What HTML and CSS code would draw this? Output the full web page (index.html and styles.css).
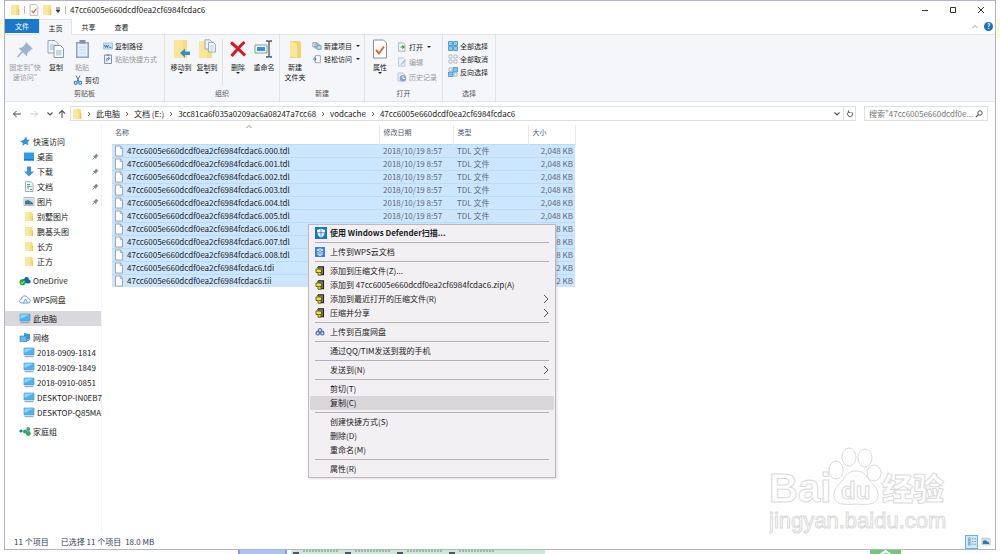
FILE: index.html
```html
<!DOCTYPE html>
<html lang="zh-CN">
<head>
<meta charset="utf-8">
<title>47cc6005e660dcdf0ea2cf6984fcdac6</title>
<link rel="stylesheet" href="styles.css">
</head>
<body>
<svg class="sprite" aria-hidden="true">
  <symbol id="folder" viewBox="0 0 10 12"><path d="M1 1h7l1 1v9H1z" fill="#f9dd82"/><path d="M1 1h5v10H1z" fill="#fce79c"/><path d="M8 5h1.4v6H8z" fill="#efc85c"/></symbol>
  <symbol id="file" viewBox="0 0 10 12"><path d="M1.500 1h5l2 2.200V11h-7z" fill="#fff" stroke="#8b949c" stroke-width=".8"/><path d="M6.300 1v2.500h2.200" fill="none" stroke="#8b949c" stroke-width=".7"/></symbol>
  <symbol id="checkdoc" viewBox="0 0 16 20"><path d="M1.500 1h10l3 3v15h-13z" fill="#fff" stroke="#8a8f98"/><path d="M4 11l3 3.500 5-7" fill="none" stroke="#e0662c" stroke-width="2"/></symbol>
  <symbol id="pc" viewBox="0 0 12 11"><path d="M1 1h10v7H1z" fill="#4bb3ee" stroke="#5b9cc4" stroke-width=".7"/><path d="M1.500 1.500h9L1.500 6z" fill="#8fd5fa"/><path d="M1.500 9.700h9" stroke="#8a9aa6" stroke-width="1"/></symbol>
  <symbol id="pushpin" viewBox="0 0 8 8"><path d="M4.500.5l3 3-1 .3-1.500 1.500L4.700 7 1 3.300l1.800-.3L4.300 1.500z" fill="#7e8b99"/><path d="M3 5L.6 7.400" stroke="#7e8b99" stroke-width=".9"/></symbol>
  <symbol id="bigpin" viewBox="0 0 20 20"><path d="M11 3l7 7-2 .6-3.500 3.400-.6 3.500L3.500 9l3.500-.6L10.400 5z" fill="#9fb3cf"/><path d="M7.500 12.500L2.500 18" stroke="#9fb3cf" stroke-width="1.600"/></symbol>
  <symbol id="copy" viewBox="0 0 20 20"><path d="M2 1.500h7l3 3V14H2z" fill="#eef4fb" stroke="#93a5b8"/><path d="M4 6h5M4 8h5M4 10h5" stroke="#8fbce0"/><path d="M8 6.500h6.500l3 3v9H8z" fill="#fff" stroke="#8598ae"/><path d="M10 11h5.500v5.500H10z" fill="#b7d8f1"/></symbol>
  <symbol id="paste" viewBox="0 0 20 20"><path d="M4 3h13v16H4z" fill="#8da4c6"/><path d="M5.500 4.500h10v13h-10z" fill="#e3effb"/><path d="M7.500 1h6v3.500h-6z" fill="#7f91ab"/><path d="M7 8h7M7 11h7M7 14h7" stroke="#c7dcf2"/></symbol>
  <symbol id="path" viewBox="0 0 10 8"><path d="M.5 1h9v6h-9z" fill="#c3e2fa" stroke="#7eb7e2" stroke-width=".7"/><path d="M1.500 3l1 2.500 1-2 1 2 1-2.500M6.300 5.300h2" fill="none" stroke="#245d91" stroke-width=".9"/></symbol>
  <symbol id="shortcut" viewBox="0 0 10 10"><path d="M1.500 1h7v8.500h-7z" fill="#eef5fc" stroke="#7589a6" stroke-width=".9"/><path d="M3.500.4h3v1.400h-3z" fill="#7589a6"/><path d="M3.800 7.500V4.500h2M5 3l1.800 1.500L5 6" fill="none" stroke="#4677b4" stroke-width=".9"/></symbol>
  <symbol id="cut" viewBox="0 0 10 10"><path d="M3 .5l3 6M7 .5l-3 6" stroke="#60758a" stroke-width="1"/><circle cx="2.800" cy="7.800" r="1.500" fill="none" stroke="#2b83c8" stroke-width="1.200"/><circle cx="7.200" cy="7.800" r="1.500" fill="none" stroke="#2b83c8" stroke-width="1.200"/></symbol>
  <symbol id="moveto" viewBox="0 0 20 20"><path d="M3 1h13v18H3z" fill="#f9dc80"/><path d="M3 1h9v18H3z" fill="#fce596"/><path d="M9 14l5-4.500v3h5v3.500h-5v2.800z" fill="#328fcf"/></symbol>
  <symbol id="copyto" viewBox="0 0 20 20"><path d="M2 2h13v17H2z" fill="#f9dc80"/><path d="M2 2h8v17H2z" fill="#fce596"/><path d="M8 .8h5l2 2V10H8z" fill="#e9f3fb" stroke="#8298ae" stroke-width=".8"/><path d="M11.500 3.500h5l2 2V13h-7z" fill="#f5fafe" stroke="#8298ae" stroke-width=".8"/><path d="M13 7h4M13 9h4M13 11h4" stroke="#89bce2" stroke-width=".7"/></symbol>
  <symbol id="delete" viewBox="0 0 20 20"><path d="M3 3.500c4 3 9 8 14 13M16.500 3C12 7 8 12 3.500 17" fill="none" stroke="#d51920" stroke-width="3"/></symbol>
  <symbol id="rename" viewBox="0 0 20 20"><path d="M1 6h12v8H1z" fill="#fff" stroke="#8795a2"/><path d="M3 8h8v4H3z" fill="#3395dd"/><path d="M12 2h2l1 1 1-1h2M15 3v14M12 18h2l1-1 1 1h2" fill="none" stroke="#4c5864" stroke-width="1.300"/></symbol>
  <symbol id="newfolder" viewBox="0 0 20 20"><path d="M5 2h10l1 2v15H5z" fill="#f5d36f"/><path d="M5 2l7 3v14l-7-2z" fill="#fce79c"/></symbol>
  <symbol id="newitem" viewBox="0 0 12 10"><path d="M1 1h5v5H1zM3.500 2.500h5v5h-5z" fill="#e8f2fa" stroke="#62809a" stroke-width=".8"/><path d="M6 4.500h5V9H6z" fill="#b5dcf6" stroke="#4c88b5" stroke-width=".8"/></symbol>
  <symbol id="easy" viewBox="0 0 12 10"><path d="M4 1h6v8.500H4z" fill="#fff" stroke="#6b7783" stroke-width=".8"/><path d="M1 5h4M3 3l2 2-2 2" fill="none" stroke="#3984bd" stroke-width="1.200"/></symbol>
  <symbol id="open" viewBox="0 0 10 12"><path d="M1 1h5.500l2 2v8H1z" fill="#fff" stroke="#818b95" stroke-width=".8"/><path d="M3 6h4M5.500 4L7.500 6l-2 2" fill="none" stroke="#299a47" stroke-width="1.300"/></symbol>
  <symbol id="edit" viewBox="0 0 10 12"><path d="M1 1h5.500l2 2v8H1z" fill="#eaf2fb" stroke="#a6b5c7" stroke-width=".8"/><path d="M3 9l5-6 1.500 1.500-5 5z" fill="#a9c4df"/></symbol>
  <symbol id="history" viewBox="0 0 10 10"><path d="M1 1h5l2 2v6H1z" fill="#e8effa" stroke="#a8b5cc" stroke-width=".7"/><circle cx="6" cy="6.200" r="3.300" fill="#8ca4d0"/><path d="M6 4v2.400h2" stroke="#fff" fill="none"/></symbol>
  <symbol id="all" viewBox="0 0 10 10"><path d="M.5.5h4v4h-4zM5.500.5h4v4h-4zM.5 5.500h4v4h-4zM5.500 5.500h4v4h-4z" fill="#8acbf3" stroke="#3690ca" stroke-width=".8"/></symbol>
  <symbol id="none" viewBox="0 0 10 10"><path d="M1 1h3v3H1zM6 1h3v3H6zM1 6h3v3H1zM6 6h3v3H6z" fill="#fff" stroke="#a5aaae" stroke-width=".8"/></symbol>
  <symbol id="invert" viewBox="0 0 10 10"><path d="M5 .5h4.500V5H5zM.5 5H5v4.500H.5z" fill="#7dc4f0" stroke="#3c93cb" stroke-width=".8"/><path d="M1 1h3v3H1zM6 6h3v3H6z" fill="#fff" stroke="#91a7b8" stroke-width=".8"/></symbol>
  <symbol id="star" viewBox="0 0 10 10"><path d="M6 .5l.8 2.800 2.800.2-2.200 2 .6 3-2.700-1.500L2.500 9.200l.6-2.900L.5 4.500l3.200-.9z" fill="#2e93da"/></symbol>
  <symbol id="desktop" viewBox="0 0 12 11"><path d="M1 1.500h10v8H1z" fill="#27a0ec"/><path d="M1 8.300h10v1.200H1z" fill="#1370b8"/></symbol>
  <symbol id="download" viewBox="0 0 12 11"><path d="M4 .5h4v5h3L6 10.500 1 5.500h3z" fill="#3b93dc"/></symbol>
  <symbol id="doc" viewBox="0 0 12 11"><path d="M2.500.7h5.500l2 2v7.800h-7.500z" fill="#f4f9fc" stroke="#8f9ba6" stroke-width=".8"/><path d="M4 3.500h3M4 5.300h4.500M4 7h2M7 8.500h2" stroke="#409bbb"/></symbol>
  <symbol id="picture" viewBox="0 0 12 11"><path d="M1 1.500h10v8H1z" fill="#fff" stroke="#9aa8b5" stroke-width=".8"/><path d="M2 2.500h8v6H2z" fill="#b9def3"/><path d="M2 5l3-1 5 3v1.500H2z" fill="#417392"/></symbol>
  <symbol id="onedrive" viewBox="0 0 12 11"><path d="M3.500 8C2 5 4 3.500 5.300 4 6 1 10 1.500 9.800 4.500 12.500 4.800 12 8.500 10 8.500z" fill="#0d66b8"/><circle cx="3.500" cy="7.300" r="3" fill="#2ba52d"/><path d="M2 7.300l1.200 1.200 2-2.200" fill="none" stroke="#fff" stroke-width=".9"/></symbol>
  <symbol id="cloud" viewBox="0 0 12 11"><path d="M3 9C0 9 0 5.500 2.500 5 2.800 1 8.500 1 9 4.500 12 5 11.800 9 9 9z" fill="#fff" stroke="#4a8be0" stroke-width=".9"/><path d="M4.500 8.500L6.500 5l2 3.500" fill="none" stroke="#4a8be0" stroke-width=".9"/></symbol>
  <symbol id="network" viewBox="0 0 12 11"><path d="M5 1l6 1v6l-6-1z" fill="#3a9bd8"/><path d="M1 4h6.500v5.500H1z" fill="#63bcf0" stroke="#2879b4" stroke-width=".6"/><path d="M7 9.500l3-1.500" stroke="#2879b4"/></symbol>
  <symbol id="homegroup" viewBox="0 0 12 11"><circle cx="2" cy="5" r="1.600" fill="#1b71a8"/><circle cx="6" cy="5.500" r="2" fill="#32a05b"/><circle cx="9.200" cy="3" r="1.900" fill="#2c9fb5"/><circle cx="9.300" cy="7.500" r="2.400" fill="#34a654"/></symbol>
  <symbol id="defender" viewBox="0 0 12 12"><path d="M0 0h12v12H0z" fill="#1679ba"/><path d="M6 1.500c1.500 1 3 1.200 4 1.200 0 4-1 6.500-4 8-3-1.500-4-4-4-8 1 0 2.500-.2 4-1.200z" fill="#fff"/><path d="M6 1v10M2 5.800h8" stroke="#1679ba" stroke-width=".8"/></symbol>
  <symbol id="wps" viewBox="0 0 10 10"><path d="M0 0h10v10H0z" fill="#3f7fe0"/><path d="M2 3l3-1.200L8 3 5 4.300zM3 5v2.500l2 1 2-1V5M5 4.500v4" fill="none" stroke="#fff" stroke-width=".9"/></symbol>
  <symbol id="zip" viewBox="0 0 10 10"><path d="M2.500 2l1-1.300h5v8H6" fill="#777" stroke="#24241c" stroke-width="1.100"/><path d="M1 3h4.500l1 1v2.500H1z" fill="#f0e52e" stroke="#45430e" stroke-width=".8"/><path d="M3 6.800v2.400h3V7" fill="#e6dc35" stroke="#33310c" stroke-width=".7"/></symbol>
  <symbol id="netdisk" viewBox="0 0 10 10"><g fill="none" stroke="#4473c8" stroke-width="1.300"><circle cx="5" cy="3.400" r="1.700"/><circle cx="2.800" cy="6.200" r="1.700"/><circle cx="7.200" cy="6.200" r="1.700"/></g></symbol>
  <symbol id="right" viewBox="0 0 8 10"><path d="M2 1l4 4-4 4" fill="none" stroke="#555" stroke-width="1"/></symbol>
  <symbol id="crumb" viewBox="0 0 6 6"><path d="M2 1l2 2-2 2" fill="none" stroke="#555" stroke-width=".9"/></symbol>
  <symbol id="down" viewBox="0 0 8 6"><path d="M1.500 1.500L4 4l2.500-2.500" fill="none" stroke="#555" stroke-width="1.200"/></symbol>
</svg>

<div class="window">
  <header class="titlebar">
    <svg class="i-tab"><use href="#folder"/></svg><span class="bar"></span>
    <svg class="i-tab"><use href="#checkdoc"/></svg>
    <svg class="i-tab"><use href="#folder"/></svg>
    <svg class="i-quick" viewBox="0 0 6 8"><path d="M1 2h4M1 4h4L3 6.500z" stroke="#333" stroke-width=".8" fill="#333"/></svg><span class="bar"></span>
    <h1>47cc6005e660dcdf0ea2cf6984fcdac6</h1>
    <div class="controls">
      <button aria-label="最小化"><svg viewBox="0 0 8 8"><path d="M1 4.500h6" stroke="#333"/></svg></button>
      <button aria-label="最大化"><svg viewBox="0 0 8 8"><path d="M1.500 1.500h5v5h-5z" fill="none" stroke="#333"/></svg></button>
      <button aria-label="关闭"><svg viewBox="0 0 8 8"><path d="M1 1l6 6M7 1L1 7" stroke="#333"/></svg></button>
    </div>
  </header>
  <nav class="tabs">
    <button class="tab tab-file">文件</button>
    <button class="tab tab-active">主页</button>
    <button class="tab">共享</button>
    <button class="tab">查看</button>
    <div class="help">
      <svg viewBox="0 0 8 8"><path d="M1.500 5L4 2.500 6.500 5" fill="none" stroke="#999"/></svg>
      <button class="help-button" aria-label="帮助">?</button>
    </div>
  </nav>

  <section class="ribbon">
    <div class="group clipboard">
      <div class="tools">
        <button class="big wide dim"><svg><use href="#bigpin"/></svg>固定到"快<br>速访问"</button>
        <button class="big"><svg><use href="#copy"/></svg>复制</button>
        <div class="stack-paste">
          <button class="big dim"><svg><use href="#paste"/></svg>粘贴</button>
          <button class="small"><svg><use href="#cut"/></svg>剪切</button>
        </div>
        <div class="smalls">
          <button class="small"><svg><use href="#path"/></svg>复制路径</button>
          <button class="small dim"><svg><use href="#shortcut"/></svg>粘贴快捷方式</button>
        </div>
      </div>
      <div class="caption">剪贴板</div>
    </div>
    <div class="group organize">
      <div class="tools">
        <button class="big drop"><svg><use href="#moveto"/></svg>移动到</button>
        <button class="big drop"><svg><use href="#copyto"/></svg>复制到</button>
        <span class="divider"></span>
        <button class="big drop"><svg><use href="#delete"/></svg>删除</button>
        <button class="big"><svg><use href="#rename"/></svg>重命名</button>
      </div>
      <div class="caption">组织</div>
    </div>
    <div class="group create">
      <div class="tools">
        <button class="big"><svg><use href="#newfolder"/></svg>新建<br>文件夹</button>
        <div class="smalls">
          <button class="small side"><svg><use href="#newitem"/></svg>新建项目</button>
          <button class="small side"><svg><use href="#easy"/></svg>轻松访问</button>
        </div>
      </div>
      <div class="caption">新建</div>
    </div>
    <div class="group opening">
      <div class="tools">
        <button class="big drop"><svg><use href="#checkdoc"/></svg>属性</button>
        <div class="smalls loose">
          <button class="small side"><svg><use href="#open"/></svg>打开</button>
          <button class="small dim"><svg><use href="#edit"/></svg>编辑</button>
          <button class="small dim"><svg><use href="#history"/></svg>历史记录</button>
        </div>
      </div>
      <div class="caption">打开</div>
    </div>
    <div class="group selecting">
      <div class="tools">
        <div class="smalls">
          <button class="small"><svg><use href="#all"/></svg>全部选择</button>
          <button class="small"><svg><use href="#none"/></svg>全部取消</button>
          <button class="small"><svg><use href="#invert"/></svg>反向选择</button>
        </div>
      </div>
      <div class="caption">选择</div>
    </div>
  </section>

  <div class="address-row">
    <div class="arrows">
      <button aria-label="后退"><svg viewBox="0 0 10 10"><path d="M9 5H1.500M4.500 2l-3 3 3 3" fill="none" stroke="#444"/></svg></button>
      <button aria-label="前进"><svg viewBox="0 0 10 10"><path d="M1 5h7.500M5.500 2l3 3-3 3" fill="none" stroke="#ccc"/></svg></button>
      <button class="recent" aria-label="最近位置"><svg viewBox="0 0 8 6"><use href="#down"/></svg></button>
      <button class="up" aria-label="向上"><svg viewBox="0 0 10 10"><path d="M5 9V1.500M2 4.500l3-3 3 3" fill="none" stroke="#555" stroke-width="1.100"/></svg></button>
    </div>
    <div class="address">
      <svg class="i-tab"><use href="#folder"/></svg>
      <svg class="i-crumb"><use href="#crumb"/></svg><button>此电脑</button>
      <svg class="i-crumb"><use href="#crumb"/></svg><button>文档 (E:)</button>
      <svg class="i-crumb"><use href="#crumb"/></svg><button>3cc81ca6f035a0209ac6a08247a7cc68</button>
      <svg class="i-crumb"><use href="#crumb"/></svg><button>vodcache</button>
      <svg class="i-crumb"><use href="#crumb"/></svg><button>47cc6005e660dcdf0ea2cf6984fcdac6</button>
      <div class="address-end">
        <button aria-label="展开"><svg viewBox="0 0 8 6"><use href="#down"/></svg></button>
        <button class="refresh" aria-label="刷新"><svg viewBox="0 0 10 10"><path d="M7 2.500A3.200 3.200 0 1 1 3.500 2.300M3 .5v2.500h2.500" fill="none" stroke="#555" stroke-width="1.200"/></svg></button>
      </div>
    </div>
    <label class="search">
      <input type="text" aria-label="搜索" placeholder="搜索&quot;47cc6005e660dcdf0e...">
      <svg viewBox="0 0 8 8"><circle cx="5" cy="3" r="2.200" fill="none" stroke="#555"/><path d="M3.400 4.600L.8 7.200" stroke="#555" stroke-width="1.200"/></svg>
    </label>
  </div>

  <main class="main">
    <nav class="sidebar">
      <div class="set">
        <a href="#"><svg><use href="#star"/></svg>快速访问</a>
        <a href="#" class="child"><svg><use href="#desktop"/></svg>桌面<svg class="pin"><use href="#pushpin"/></svg></a>
        <a href="#" class="child"><svg><use href="#download"/></svg>下载<svg class="pin"><use href="#pushpin"/></svg></a>
        <a href="#" class="child"><svg><use href="#doc"/></svg>文档<svg class="pin"><use href="#pushpin"/></svg></a>
        <a href="#" class="child"><svg><use href="#picture"/></svg>图片<svg class="pin"><use href="#pushpin"/></svg></a>
        <a href="#" class="child"><svg><use href="#folder"/></svg>别墅图片</a>
        <a href="#" class="child"><svg><use href="#folder"/></svg>鹏基头图</a>
        <a href="#" class="child"><svg><use href="#folder"/></svg>长方</a>
        <a href="#" class="child"><svg><use href="#folder"/></svg>正方</a>
      </div>
      <div class="set"><a href="#"><svg><use href="#onedrive"/></svg>OneDrive</a></div>
      <div class="set"><a href="#"><svg><use href="#cloud"/></svg>WPS网盘</a></div>
      <div class="set"><a href="#" class="current"><svg><use href="#pc"/></svg>此电脑</a></div>
      <div class="set">
        <a href="#"><svg><use href="#network"/></svg>网络</a>
        <a href="#" class="child"><svg><use href="#pc"/></svg>2018-0909-1814</a>
        <a href="#" class="child"><svg><use href="#pc"/></svg>2018-0909-1849</a>
        <a href="#" class="child"><svg><use href="#pc"/></svg>2018-0910-0851</a>
        <a href="#" class="child"><svg><use href="#pc"/></svg>DESKTOP-IN0EB7</a>
        <a href="#" class="child"><svg><use href="#pc"/></svg>DESKTOP-Q85MA</a>
      </div>
      <div class="set"><a href="#"><svg><use href="#homegroup"/></svg>家庭组</a></div>
    </nav>
    <div class="files">
      <table>
        <colgroup><col class="c-name"><col class="c-date"><col class="c-type"><col class="c-size"></colgroup>
        <thead><tr><th>名称<svg class="sort" viewBox="0 0 8 6"><path d="M1.500 4L4 1.500 6.500 4" fill="none" stroke="#777" stroke-width=".8"/></svg></th><th>修改日期</th><th>类型</th><th>大小</th></tr></thead>
        <tbody>
          <tr><td><svg><use href="#file"/></svg>47cc6005e660dcdf0ea2cf6984fcdac6.000.tdl</td><td>2018/10/19 8:57</td><td>TDL 文件</td><td>2,048 KB</td></tr>
          <tr><td><svg><use href="#file"/></svg>47cc6005e660dcdf0ea2cf6984fcdac6.001.tdl</td><td>2018/10/19 8:57</td><td>TDL 文件</td><td>2,048 KB</td></tr>
          <tr><td><svg><use href="#file"/></svg>47cc6005e660dcdf0ea2cf6984fcdac6.002.tdl</td><td>2018/10/19 8:57</td><td>TDL 文件</td><td>2,048 KB</td></tr>
          <tr><td><svg><use href="#file"/></svg>47cc6005e660dcdf0ea2cf6984fcdac6.003.tdl</td><td>2018/10/19 8:57</td><td>TDL 文件</td><td>2,048 KB</td></tr>
          <tr><td><svg><use href="#file"/></svg>47cc6005e660dcdf0ea2cf6984fcdac6.004.tdl</td><td>2018/10/19 8:57</td><td>TDL 文件</td><td>2,048 KB</td></tr>
          <tr><td><svg><use href="#file"/></svg>47cc6005e660dcdf0ea2cf6984fcdac6.005.tdl</td><td>2018/10/19 8:57</td><td>TDL 文件</td><td>2,048 KB</td></tr>
          <tr><td><svg><use href="#file"/></svg>47cc6005e660dcdf0ea2cf6984fcdac6.006.tdl</td><td></td><td></td><td>8 KB</td></tr>
          <tr><td><svg><use href="#file"/></svg>47cc6005e660dcdf0ea2cf6984fcdac6.007.tdl</td><td></td><td></td><td>8 KB</td></tr>
          <tr><td><svg><use href="#file"/></svg>47cc6005e660dcdf0ea2cf6984fcdac6.008.tdl</td><td></td><td></td><td>8 KB</td></tr>
          <tr><td><svg><use href="#file"/></svg>47cc6005e660dcdf0ea2cf6984fcdac6.tdi</td><td></td><td></td><td>2 KB</td></tr>
          <tr><td><svg><use href="#file"/></svg>47cc6005e660dcdf0ea2cf6984fcdac6.tii</td><td></td><td></td><td>2 KB</td></tr>
        </tbody>
      </table>
    </div>
  </main>

  <footer class="status">
    <span>11 个项目</span><span>已选择 11 个项目</span><span>18.0 MB</span>
    <div class="views">
      <button class="view view-on" aria-label="详细信息"><svg viewBox="0 0 10 10"><path d="M1 1h2v2H1zM1 4h2v2H1zM1 7h2v2H1z" fill="none" stroke="#6b8796" stroke-width=".7"/><path d="M4.500 2h2M4.500 5h2M4.500 8h2M7.500 2h2M7.500 5h2M7.500 8h2" stroke="#6b8796" stroke-width=".8"/></svg></button>
      <button class="view" aria-label="大图标"><svg viewBox="0 0 12 11"><use href="#picture"/></svg></button>
    </div>
  </footer>

  <svg class="watermark" viewBox="0 0 180 92" role="img" aria-label="Baidu 经验">
    <g fill="#fff" stroke="#dadada" stroke-width="1">
      <ellipse cx="67" cy="25" rx="7" ry="9"/><ellipse cx="80" cy="12" rx="7" ry="9"/><ellipse cx="96" cy="13" rx="7" ry="9"/><ellipse cx="105" cy="28" rx="7" ry="8"/>
      <path d="M87 26c8 0 10 5 14 10 5 5 8 9 8 14 0 10-10 10-22 9-12 1-22 1-22-9 0-5 3-9 8-14 4-5 6-10 14-10z"/>
      <text class="wm-bold" x="0" y="57">Bai</text>
      <text class="wm-du" x="72" y="54">du</text>
      <text class="wm-cjk" x="113" y="55">经验</text>
      <text class="wm-url" x="0" y="83">jingyan.baidu.com</text>
    </g>
  </svg>
</div>

<div class="behind">
  <div class="thumb thumb-blue"></div>
  <div class="thumb"></div><div class="thumb"></div><div class="thumb"></div><div class="thumb thumb-long"></div>
  <svg class="totop" viewBox="0 0 31 4"><path d="M0 0h31v4H0z" fill="#72c77b"/><path d="M10 5l5.500-4 5.500 4" fill="none" stroke="#fff" stroke-width="2"/></svg>
</div>

<div class="menu" role="menu">
  <button role="menuitem" class="strong"><svg class="shield"><use href="#defender"/></svg>使用 Windows Defender扫描...</button>
  <hr>
  <button role="menuitem"><svg><use href="#wps"/></svg>上传到WPS云文档</button>
  <hr>
  <button role="menuitem"><svg><use href="#zip"/></svg>添加到压缩文件(Z)...</button>
  <button role="menuitem"><svg><use href="#zip"/></svg>添加到 47cc6005e660dcdf0ea2cf6984fcdac6.zip(A)</button>
  <button role="menuitem"><svg><use href="#zip"/></svg>添加到最近打开的压缩文件(R)<svg class="more"><use href="#right"/></svg></button>
  <button role="menuitem"><svg><use href="#zip"/></svg>压缩并分享<svg class="more"><use href="#right"/></svg></button>
  <hr>
  <button role="menuitem"><svg><use href="#netdisk"/></svg>上传到百度网盘</button>
  <hr>
  <button role="menuitem" class="plain">通过QQ/TIM发送到我的手机</button>
  <hr>
  <button role="menuitem" class="plain">发送到(N)<svg class="more"><use href="#right"/></svg></button>
  <hr>
  <button role="menuitem" class="plain">剪切(T)</button>
  <button role="menuitem" class="plain hover">复制(C)</button>
  <hr>
  <button role="menuitem" class="plain">创建快捷方式(S)</button>
  <button role="menuitem" class="plain">删除(D)</button>
  <button role="menuitem" class="plain">重命名(M)</button>
  <hr>
  <button role="menuitem" class="plain">属性(R)</button>
</div>
</body>
</html>
```

FILE: styles.css
```css
* { box-sizing: border-box; }

body {
  margin: 0;
  padding: 0 4px;
  min-height: 100vh;
  display: flex;
  flex-direction: column;
  position: relative;
  overflow: hidden;
  background: linear-gradient(#fdfbdc, #fdfbdc) 0 19px / 100% 19px no-repeat #fefefe;
  font: 8px/10px "Noto Sans CJK SC", sans-serif;
  color: #222;
}

button, input {
  font: inherit;
  color: inherit;
  background: none;
  border: 0;
  padding: 0;
  margin: 0;
}

svg { display: block; flex: none; }
.sprite { position: absolute; width: 0; height: 0; }

.window {
  flex: 1;
  display: flex;
  flex-direction: column;
  position: relative;
  background: #fff;
  border: 1px solid #b4b4c6;
}

/* Title bar */
.titlebar {
  display: flex;
  align-items: center;
  height: 18px;
  padding-left: 5px;
  gap: 3px;
}
.titlebar h1 { margin: 0; font-size: 8px; font-weight: 400; }
.i-tab { width: 10px; height: 12px; }
.i-quick { width: 6px; height: 8px; }
.bar { width: 1px; height: 8px; background: #bbb; }
.titlebar .bar { margin: 0 1px; }
.controls { margin-left: auto; display: flex; }
.controls button { width: 28px; display: flex; justify-content: center; }
.controls svg { width: 8px; height: 8px; }

/* Ribbon tabs */
.tabs { display: flex; height: 16px; border-bottom: 1px solid #e3e3ea; }
.tab { width: 33px; font-size: 7px; }
.tab-file { width: 34px; height: 14px; background: #1979ca; color: #fff; }
.tab-active {
  height: 16px;
  background: #f5f6fa;
  border: 1px solid #e3e3ea;
  border-bottom: 0;
}
.help { margin-left: auto; display: flex; align-items: center; gap: 5px; padding-right: 2px; }
.help svg { width: 8px; height: 8px; }
.help-button {
  width: 9px;
  height: 9px;
  border-radius: 50%;
  background: #1672be;
  color: #fff;
  font-size: 7px;
  line-height: 9px;
  font-weight: 700;
}

/* Ribbon */
.ribbon {
  display: flex;
  height: 67px;
  background: #f5f6fa;
  border-bottom: 1px solid #e3e3ea;
  font-size: 7px;
}
.group { display: flex; flex-direction: column; border-right: 1px solid #e3e3ea; }
.clipboard { width: 160px; }
.organize { width: 115px; }
.create { width: 85px; }
.opening { width: 78px; }
.selecting { width: 53px; }
.tools { display: flex; flex: 1; padding: 4px 2px 0; }
.caption { text-align: center; height: 13px; color: #555; }
.big {
  width: 26px;
  height: 44px;
  display: flex;
  flex-direction: column;
  align-items: center;
  white-space: nowrap;
}
.big.wide { width: 36px; }
.big svg { width: 20px; height: 20px; margin-bottom: 3px; }
.drop::after, .side::after {
  content: "";
  border: 2px solid transparent;
  border-top-color: #222;
  border-bottom: 0;
}
.side::after { margin-left: 2px; }
.dim { color: #999; }
.stack-paste .big { height: 34px; }
.stack-paste .small { margin-left: 4px; }
.smalls { padding-left: 4px; display: flex; flex-direction: column; }
.small {
  display: flex;
  align-items: center;
  gap: 2px;
  height: 13px;
  white-space: nowrap;
}
.small svg { width: 10px; height: 10px; }
.loose .small { height: 15px; }
.divider { width: 1px; height: 46px; background: #e0e0e8; margin: 0 2px; }
.organize .tools { padding-left: 3px; }
.selecting .smalls { padding-left: 3px; }

/* Address bar */
.address-row { display: flex; align-items: center; height: 23px; padding-right: 7px; }
.arrows { display: flex; align-items: center; width: 65px; padding-left: 7px; }
.arrows button { width: 17px; }
.arrows svg { width: 10px; height: 10px; }
.arrows .recent { width: 11px; }
.arrows .recent svg { width: 8px; height: 6px; }
.arrows .up { width: 10px; }
.address {
  flex: 1;
  display: flex;
  align-items: center;
  height: 15px;
  gap: 4px;
  border: 1px solid #dedee4;
  padding-left: 1px;
  white-space: nowrap;
}
.i-crumb { width: 6px; height: 6px; }
.address-end { margin-left: auto; display: flex; height: 100%; }
.address-end button { width: 12px; display: flex; align-items: center; justify-content: center; }
.address-end svg { width: 8px; height: 8px; }
.address-end .refresh { border-left: 1px solid #dedee4; }
.search {
  width: 124px;
  height: 15px;
  margin-left: 8px;
  display: flex;
  align-items: center;
  border: 1px solid #dedee4;
  padding: 0 4px;
}
.search input { flex: 1; min-width: 0; outline: 0; }
.search input::placeholder { color: #777; opacity: 1; }
.search svg { width: 8px; height: 8px; }

/* Navigation pane */
.main { flex: 1; display: flex; min-height: 0; }
.sidebar { width: 97px; padding-top: 9px; border-right: 1px solid #f5f5f7; }
.set { margin-bottom: 4px; }
.sidebar a {
  display: flex;
  align-items: center;
  height: 15px;
  gap: 2px;
  padding-left: 14px;
  color: inherit;
  text-decoration: none;
  white-space: nowrap;
}
.sidebar .child { padding-left: 18px; }
.sidebar svg { width: 12px; height: 11px; }
.sidebar .pin { width: 7px; height: 7px; margin: 0 2px 0 auto; }
.sidebar .current { background: #d9d8dc; }

/* File list */
.files { flex: 1; padding-left: 10px; }
table { table-layout: fixed; width: 463px; border-collapse: collapse; }
.c-name { width: 267px; }
.c-date { width: 74px; }
.c-type { width: 75px; }
.c-size { width: 47px; }
th, td { padding: 0 4px; text-align: left; white-space: nowrap; }
th {
  height: 19px;
  padding-bottom: 4px;
  border-right: 1px solid #e8e8ee;
  font-size: 7px;
  font-weight: 400;
  color: #4c5a75;
  position: relative;
}
th:first-child { padding-left: 3px; }
.sort { position: absolute; top: -1px; left: 50%; width: 8px; height: 6px; }
tbody tr { height: 13px; background: #cce6ff; border-top: 1px solid #b9dcf8; }
td { color: #5c6b7c; }
td:first-child { display: flex; align-items: center; gap: 3px; height: 12px; padding-left: 2px; color: #222; }
td svg { width: 10px; height: 12px; }
td:last-child { text-align: right; padding-right: 2px; }

/* Status bar */
.status { display: flex; align-items: center; height: 15px; padding-left: 9px; gap: 12px; color: #33415c; }
.status span:nth-child(3) { margin-left: -8px; }
.views { margin-left: auto; display: flex; gap: 1px; padding-right: 3px; }
.view { width: 13px; height: 14px; display: flex; align-items: center; justify-content: center; }
.view svg { width: 10px; height: 9px; }
.view-on { background: #cdeafa; border: 1px solid #62b4dc; }

/* Watermark */
.watermark { position: absolute; right: 46px; bottom: 12px; width: 180px; height: 92px; }
.wm-bold { font: 700 40px "Liberation Sans", sans-serif; }
.wm-du { font: 700 24px "Liberation Sans", sans-serif; }
.wm-cjk { font: 900 31px "Noto Sans CJK SC", sans-serif; }
.wm-url { font: 22px "Liberation Sans", sans-serif; }

/* Page edge below the window */
.behind { display: flex; height: 4px; padding-left: 234px; position: relative; }
.thumb { width: 52px; background: linear-gradient(#55526e, #55526e) 2px 2px / 6px 2px no-repeat, repeating-linear-gradient(90deg, #9db9a6 0 2px, #c9ead3 2px 3px) 12px 0 / 36px 2px no-repeat #c9ead3; }
.thumb-blue { width: 49px; margin-right: 4px; background: #a9c4f3; border: solid #7e9fe6; border-width: 0 2px; }
.thumb-long { width: 98px; }
.totop { position: absolute; right: 95px; top: 0; width: 31px; height: 4px; }

/* Context menu */
.menu {
  position: absolute;
  left: 308px;
  top: 224px;
  width: 248px;
  padding: 1px;
  background: #f2f0f3;
  border: 1px solid #bcbac0;
  box-shadow: 1px 1px 2px #0002;
}
.menu button {
  display: flex;
  align-items: center;
  width: 100%;
  height: 14px;
  gap: 5px;
  padding-left: 5px;
  white-space: nowrap;
}
.menu svg { width: 10px; height: 10px; }
.menu .shield { width: 12px; height: 12px; margin-right: -2px; }
.menu .more { width: 8px; margin: 0 4px 0 auto; }
.menu .plain { padding-left: 20px; }
.menu .strong { font-weight: 700; }
.menu .hover { background: #d9d7da; }
.menu hr { margin: 2px 5px; border: 0; height: 1px; background: #b4b2b7; }
```
